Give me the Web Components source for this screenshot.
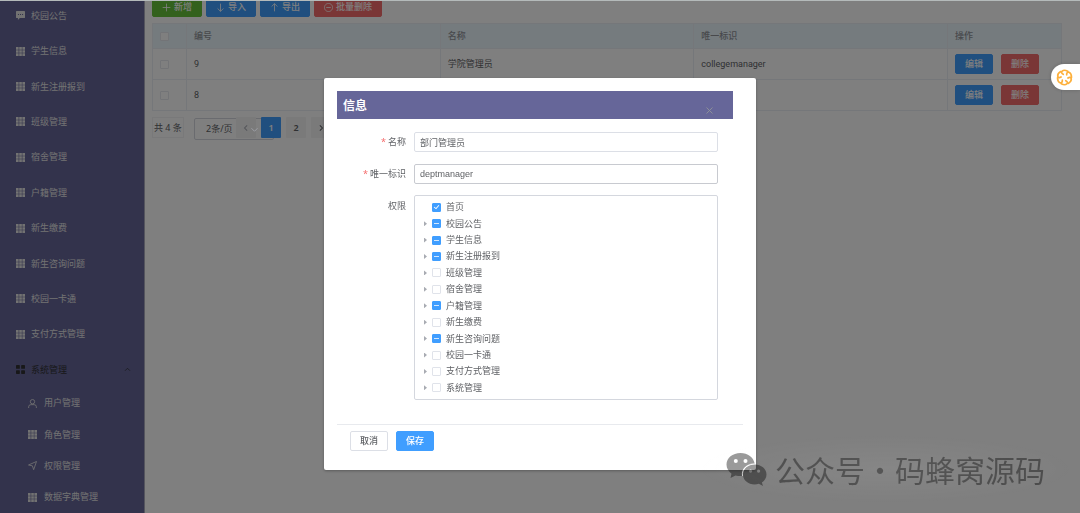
<!DOCTYPE html>
<html lang="zh-CN">
<head>
<meta charset="utf-8">
<title>角色管理</title>
<style>
  html, body { margin: 0; height: 100%; overflow: hidden; background: #fff; }
  body { font: 9px/12px "Noto Sans", "Noto Sans CJK SC", sans-serif; color: #606266; }
</style>
</head>
<body>
<admin-app></admin-app>
<script>
const FONT = '"Noto Sans", "Noto Sans CJK SC", sans-serif';
const ICONS = {
  grid: '<path fill="currentColor" d="M0 0h4.1v4.1H0zM5 0h4.1v4.1H5zM9.900 0H14v4.1H9.900zM0 5h4.1v4.1H0zM5 5h4.1v4.1H5zM9.900 5H14v4.1H9.900zM0 9.900h4.1V14H0zM5 9.900h4.1V14H5zM9.900 9.900H14V14H9.900z"/>',
  chat: '<path fill="currentColor" fill-rule="evenodd" d="M1 0h12a1 1 0 0 1 1 1v9a1 1 0 0 1-1 1H6l-3 3v-3H1a1 1 0 0 1-1-1V1a1 1 0 0 1 1-1zM3 4.7v1.6h1.6V4.700zM6.2 4.700v1.6h1.6V4.700zM9.4 4.700v1.6H11V4.700z"/>',
  menu: '<g fill="currentColor"><rect width="6" height="6" rx="1"/><rect x="8" width="6" height="6" rx="1"/><rect y="8" width="6" height="6" rx="1"/><rect x="8" y="8" width="6" height="6" rx="1"/></g>',
  user: '<g fill="none" stroke="currentColor" stroke-width="1.3"><circle cx="7" cy="4.2" r="3.4"/><path d="M1 14v-2a3.500 3.500 0 0 1 3.500-3.200h5A3.500 3.500 0 0 1 13 12v2"/></g>',
  send: '<path fill="none" stroke="currentColor" stroke-width="1.3" stroke-linejoin="round" d="M13.200.8L.8 6.200l6 1.300 2 6z"/>',
  plus: '<path fill="none" stroke="currentColor" stroke-width="1.300" d="M7 1v12M1 7h12"/>',
  down: '<path fill="none" stroke="currentColor" stroke-width="1.300" d="M7 1v12M2.500 8.500L7 13l4.500-4.500"/>',
  up: '<path fill="none" stroke="currentColor" stroke-width="1.300" d="M7 13V1M2.500 5.500L7 1l4.500 4.500"/>',
  minus: '<path fill="none" stroke="currentColor" stroke-width="1.300" d="M3.500 7h7M7 .7a6.300 6.300 0 1 0 .01 0z"/>',
  left: '<path fill="none" stroke="currentColor" stroke-width="1.800" d="M9 2.500L4.500 7 9 11.500"/>',
  right: '<path fill="none" stroke="currentColor" stroke-width="1.800" d="M5 2.500L9.500 7 5 11.500"/>',
  caretUp: '<path fill="none" stroke="currentColor" stroke-width="1.500" d="M2 9.500l5-5 5 5"/>',
  caretDown: '<path fill="none" stroke="currentColor" stroke-width="1.800" d="M1 4.500l6 6 6-6"/>',
  close: '<path fill="none" stroke="currentColor" stroke-width="1.800" d="M1 1l12 12M13 1L1 13"/>'
};
const icon = (name, size = 9) => `<svg class="icon" viewBox="0 0 14 14" width="${size}" height="${size}" aria-hidden="true">${ICONS[name]}</svg>`;
const BASE = `*{box-sizing:border-box} .icon{display:block;flex:none} button,select,input{font:inherit;margin:0}`;

function element(name, render) {
  customElements.define(name, class extends HTMLElement {
    constructor() { super(); this.attachShadow({ mode: 'open' }); }
    connectedCallback() {
      const t = document.createElement('template');
      t.innerHTML = render(this);
      this.shadowRoot.replaceChildren(t.content.cloneNode(true));
      this.shadowRoot.querySelectorAll('input[data-partial]').forEach(i => { i.indeterminate = true; });
    }
  });
}

element('menu-item', el => `<style>${BASE}
  :host{display:flex;flex:1 0 35px;color:#e4e4e4}
  :host([sub]){flex-basis:31px}
  :host([group]){color:#303133}
  a{flex:1;display:flex;align-items:center;gap:6px;padding:0 13px 0 16px;color:inherit;text-decoration:none}
  :host([sub]) a{padding-left:28px;gap:7px}
  .text{flex:1}
  </style><a href="#">${icon(el.getAttribute('icon') || 'grid')}<span class="text"><slot></slot></span>${el.hasAttribute('group') ? icon('caretUp', 7) : ''}</a>`);

element('side-menu', () => `<style>${BASE}
  :host{display:block;overflow:hidden;background:#669;border-right:1px solid #aaaabc}
  nav{display:flex;flex-direction:column;min-height:calc(100% + 2px);margin-top:-2px}
  </style><nav>
  <menu-item icon="chat">校园公告</menu-item>
  ${['学生信息','新生注册报到','班级管理','宿舍管理','户籍管理','新生缴费','新生咨询问题','校园一卡通','支付方式管理'].map(t => `<menu-item>${t}</menu-item>`).join('')}
  <menu-item icon="menu" group>系统管理</menu-item>
  <menu-item sub icon="user">用户管理</menu-item>
  <menu-item sub>角色管理</menu-item>
  <menu-item sub icon="send">权限管理</menu-item>
  <menu-item sub>数据字典管理</menu-item>
  </nav>`);

element('ui-button', el => `<style>${BASE}
  :host{display:inline-flex;--bg:#409eff;--line:var(--bg);--ink:#fff}
  :host([kind=success]){--bg:#67c23a}
  :host([kind=danger]){--bg:#f56c6c}
  :host([kind=plain]){--bg:#fff;--line:#dcdfe6;--ink:#606266}
  button{display:flex;align-items:center;justify-content:center;gap:3px;height:20px;padding:0 9px;font-weight:500;
    background:var(--bg);border:1px solid var(--line);border-radius:2px;color:var(--ink);white-space:nowrap}
  </style><button type="button">${el.getAttribute('icon') ? icon(el.getAttribute('icon')) : ''}<slot></slot></button>`);

element('tool-bar', () => `<style>${BASE}
  :host{display:flex;gap:4px;margin-top:-3px}
  </style>
  <ui-button kind="success" icon="plus">新增</ui-button>
  <ui-button icon="down">导入</ui-button>
  <ui-button icon="up">导出</ui-button>
  <ui-button kind="danger" icon="minus">批量删除</ui-button>`);

element('role-table', () => `<style>${BASE}
  :host{display:block;font-family:Roboto,"Noto Sans CJK SC",sans-serif}
  table{width:100%;border-collapse:collapse;table-layout:fixed;border:1px solid #ebeef5}
  th,td{height:31px;padding:0 7px;text-align:left;font-weight:400;border:1px solid #ebeef5}
  th{height:25px;background:#eaf6fd;color:#909399;font-weight:500}
  .check{width:34px;padding:0 0 0 7px}
  .ops{width:114px}
  input{display:block;appearance:none;width:9px;height:9px;border:1px solid #e6e8ee;border-radius:1px;background:#fff}
  .actions{display:flex;gap:8px}
  </style><table>
  <thead><tr><th class="check"><input type="checkbox" aria-label="全选"></th><th>编号</th><th>名称</th><th>唯一标识</th><th class="ops">操作</th></tr></thead>
  <tbody>${[['9','学院管理员','collegemanager'],['8','','']].map(r => `<tr><td class="check"><input type="checkbox" aria-label="选择 ${r[0]}"></td>${r.map(c => `<td>${c}</td>`).join('')}<td><div class="actions"><ui-button>编辑</ui-button><ui-button kind="danger">删除</ui-button></div></td></tr>`).join('')}</tbody></table>`);

element('page-bar', () => `<style>${BASE}
  :host{display:flex;align-items:flex-start}
  .total{height:21px;padding:0 1px;border:1px solid #f2f2f4;line-height:20px;white-space:nowrap;min-width:32px;margin-right:10px}
  .size{position:relative;width:80px;margin-top:1px}
  select{appearance:none;width:100%;height:22px;padding:0 11px;border:1px solid #d4d7de;border-radius:2px;background:#fff;color:#606266}
  .size .icon{position:absolute;z-index:1;right:16px;top:8px;color:#a0a3aa}
  .pages{display:flex;gap:5px;margin-left:-38px}
  button{display:flex;align-items:center;justify-content:center;width:20px;height:21px;padding:0;border:0;border-radius:1px;background:#f4f4f5;color:#606266;font-weight:600;position:relative}
  button:first-child{color:#a8abb2}
  button[aria-current]{background:#409eff;color:#fff}
  </style><span class="total">共 4 条</span>
  <span class="size"><select aria-label="每页条数"><option>2条/页</option></select>${icon('caretDown', 7)}</span>
  <span class="pages"><button type="button" aria-label="上一页">${icon('left', 8)}</button><button type="button" aria-current="page">1</button><button type="button">2</button><button type="button" aria-label="下一页">${icon('right', 8)}</button></span>`);

element('tree-row', el => `<style>${BASE}
  :host{display:flex;flex:1 0 16px;align-items:center}
  .arrow{width:3px;height:5px;margin-right:5px;background:#a8abb2;clip-path:polygon(0 0,100% 50%,0 100%)}
  :host([leaf]) .arrow{visibility:hidden}
  label{display:flex;align-items:center;gap:5px}
  input{appearance:none;width:9px;height:9px;border:1px solid #e0e3ea;border-radius:1px;background:#fff;display:grid;place-items:center}
  input:checked,input:indeterminate{background:#409eff;border-color:#409eff}
  input:indeterminate::before{content:"";width:5px;height:1px;background:#d3e8ff}
  input:checked::before{content:"";width:7px;height:7px;background:#fff;clip-path:polygon(10% 50%,20% 42%,42% 62%,80% 18%,90% 26%,44% 80%)}
  </style><span class="arrow"></span><label><input type="checkbox" ${el.getAttribute('state') === 'on' ? 'checked' : el.getAttribute('state') === 'part' ? 'data-partial' : ''}><slot></slot></label>`);

element('role-dialog', () => `<style>${BASE}
  :host{display:block;width:40%;margin:0 auto;padding:13px;background:#fff;border-radius:2px;box-shadow:0 1px 3px rgba(0,0,0,.3)}
  header{display:flex;align-items:center;justify-content:space-between;height:28px;margin-right:10px;padding:0 20px 0 6px;background:#669}
  h2{margin:0;padding-top:2px;font-size:12px;line-height:16px;color:#fff}
  .close{display:block;align-self:flex-end;padding:0 0 5px;border:0;background:none;color:#909399}
  form{display:grid;grid-template-columns:69px 1fr;column-gap:8px;row-gap:12px;padding:13px 25px 24px 0}
  .name{text-align:right;line-height:20px}
  .need::before{content:"*";color:#f56c6c;margin-right:2px}
  input{width:100%;height:20px;padding:0 5px;border:1px solid #dcdfe6;border-radius:2px;color:#606266;background:#fff}
  input#key{border-color:#c8cad0;font-family:"Liberation Sans",sans-serif}
  .tree{display:flex;flex-direction:column;height:205px;margin-top:-1px;padding:3px 9px;border:1px solid #d4d7de;border-radius:2px}
  footer{display:flex;gap:8px;padding:6px 13px;border-top:1px solid #e8eaee}
  </style>
  <header><h2>信息</h2><button class="close" type="button" aria-label="关闭">${icon('close', 7)}</button></header>
  <form>
    <label class="name need" for="name">名称</label><input id="name" value="部门管理员">
    <label class="name need" for="key">唯一标识</label><input id="key" value="deptmanager">
    <span class="name">权限</span>
    <div class="tree">
      <tree-row leaf state="on">首页</tree-row>
      <tree-row state="part">校园公告</tree-row>
      <tree-row state="part">学生信息</tree-row>
      <tree-row state="part">新生注册报到</tree-row>
      <tree-row>班级管理</tree-row>
      <tree-row>宿舍管理</tree-row>
      <tree-row state="part">户籍管理</tree-row>
      <tree-row>新生缴费</tree-row>
      <tree-row state="part">新生咨询问题</tree-row>
      <tree-row>校园一卡通</tree-row>
      <tree-row>支付方式管理</tree-row>
      <tree-row>系统管理</tree-row>
    </div>
  </form>
  <footer><ui-button kind="plain">取消</ui-button><ui-button>保存</ui-button></footer>`);

element('assist-tab', () => `<style>${BASE}
  :host{display:block;position:fixed;right:0;top:64px}
  button{display:flex;align-items:center;width:29px;height:26px;padding:0 5px;border:0;border-radius:13px 0 0 13px;background:#fff;box-shadow:0 0 4px rgba(0,0,0,.2)}
  </style><button type="button" aria-label="助手"><svg width="17" height="17" viewBox="-10 -10 20 20"><g fill="none" stroke="#fdb03c" stroke-width="2" stroke-linecap="round">${[0,60,120,180,240,300].map(a => `<path transform="rotate(${a})" d="M-1.500-3.800C-6-6-2-10.500 3.800-7.300"/>`).join('')}</g></svg></button>`);

element('water-mark', () => `<style>${BASE}
  :host{display:flex;align-items:center;gap:8px;position:fixed;right:35px;bottom:22px;color:rgba(0,0,0,.4);font:30px/44px "Noto Sans CJK SC",sans-serif;pointer-events:none}
  :host::before{content:"";position:absolute;inset:-12px -30px;background:radial-gradient(closest-side,rgba(255,255,255,.06),transparent)}
  .text{white-space:nowrap}
  </style><svg width="41" height="34" viewBox="0 0 41 34"><g fill="currentColor" fill-rule="evenodd">
  <path d="M14.500 1C6.500 1 .5 6 .5 12.600c0 3.700 1.900 6.900 5 9.100L4.500 26l5-2.600c1.900.6 3.900.8 6.500.7-.9-7.500 4.500-12.300 12.700-12.400C27.600 5.300 21.800 1 14.500 1zM9.800 7a2 2 0 1 1 0 4 2 2 0 0 1 0-4zM19.500 7a2 2 0 1 1 0 4 2 2 0 0 1 0-4z"/>
  <path d="M28.700 12.500c-6.600 0-11.700 4.300-11.700 9.900s5.100 10 11.700 10c1.500 0 2.900-.2 4.100-.6l4.200 2.200-1.100-3.600c2.800-1.900 4.600-4.700 4.600-8 0-5.600-5.300-9.900-11.800-9.900zM24.600 17.500a1.600 1.600 0 1 1 0 3.200 1.600 1.600 0 0 1 0-3.200zM32.600 17.500a1.600 1.600 0 1 1 0 3.200 1.600 1.600 0 0 1 0-3.200z"/></g>
  <path d="M16.500 24c-1-7 4.500-12.300 12.200-12.300" fill="none" stroke="#fff" stroke-opacity=".6"/></svg>
  <span class="text">公众号·码蜂窝源码</span>`);

element('admin-app', () => `<style>${BASE}
  :host{display:grid;grid-template-columns:145px 1fr;height:100vh;overflow:hidden;font-family:${FONT.replace(/"/g, "'")}}
  main{display:flex;flex-direction:column;min-width:0;padding:0 18px 0 7px}
  role-table{margin:6px 0}
  .mask{position:fixed;inset:0;overflow:hidden;background:rgba(0,0,0,.5);border-top:1px solid #b4baba}
  role-dialog{margin-top:77px}
  </style>
  <side-menu></side-menu>
  <main><tool-bar></tool-bar><role-table></role-table><page-bar></page-bar></main>
  <div class="mask"><role-dialog></role-dialog></div>
  <assist-tab></assist-tab>
  <water-mark></water-mark>`);
</script>
</body>
</html>
